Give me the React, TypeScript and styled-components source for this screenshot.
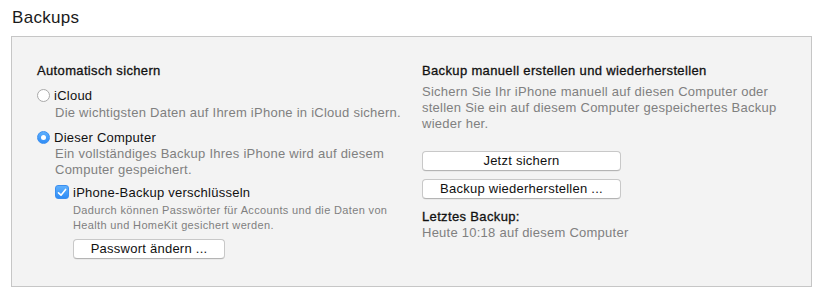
import React from "react";
import styled, { createGlobalStyle } from "styled-components";

const GlobalStyle = createGlobalStyle`
  html, body {
    margin: 0;
    padding: 0;
    background: #ffffff;
  }
  body {
    font-family: "Liberation Sans", Arial, sans-serif;
    color: #1a1a1a;
    letter-spacing: 0.25px;
    -webkit-font-smoothing: antialiased;
  }
`;

const Page = styled.div`
  width: 833px;
  height: 303px;
  padding: 6px 21px 0 11px;
  box-sizing: border-box;
`;

const Title = styled.h1`
  margin: 0 0 7px 1px;
  font-size: 17px;
  font-weight: 400;
  line-height: 23px;
  letter-spacing: 0.3px;
  color: #1a1a1a;
`;

const Panel = styled.section`
  height: 251px;
  box-sizing: border-box;
  border: 1px solid #c6c6c6;
  background: #f3f3f3;
  padding: 26px 25px 0 25px;
  display: grid;
  grid-template-columns: 385px 1fr;
`;

const Column = styled.div`
  display: flex;
  flex-direction: column;
  align-items: flex-start;
`;

const Heading = styled.div<{ $mt?: number }>`
  margin-top: ${(p) => p.$mt ?? 0}px;
  font-size: 13px;
  line-height: 16px;
  font-weight: 400;
  color: #111;
  letter-spacing: 0.35px;
  -webkit-text-stroke: 0.3px #111;
`;

const Option = styled.label<{ $mt?: number; $ml?: number }>`
  display: flex;
  align-items: center;
  gap: 4px;
  height: 18px;
  margin: ${(p) => p.$mt ?? 0}px 0 0 ${(p) => p.$ml ?? 0}px;
  font-size: 13px;
  color: #111;
`;

const Radio = styled.span<{ $checked?: boolean }>`
  width: 13px;
  height: 13px;
  border-radius: 50%;
  box-sizing: border-box;
  display: flex;
  align-items: center;
  justify-content: center;
  border: 1px solid ${(p) => (p.$checked ? "#3b8ff0" : "#a9a9a9")};
  background: ${(p) =>
    p.$checked ? "linear-gradient(#5fb0fd, #2f8cf5)" : "#ffffff"};
  &::after {
    content: "";
    display: ${(p) => (p.$checked ? "block" : "none")};
    width: 5px;
    height: 5px;
    border-radius: 50%;
    background: #fff;
  }
`;

const Check = styled.span`
  width: 14px;
  height: 14px;
  border-radius: 3px;
  box-sizing: border-box;
  background: linear-gradient(#5fb0fd, #2f8cf5);
  border: 1px solid #3b8ff0;
  display: flex;
  align-items: center;
  justify-content: center;
`;

const Hint = styled.p<{ $indent?: number; $mt?: number }>`
  margin: ${(p) => p.$mt ?? 0}px 0 0 ${(p) => p.$indent ?? 0}px;
  font-size: 13px;
  line-height: 16px;
  color: #808080;
`;

const SmallHint = styled.p`
  margin: 2px 0 0 36px;
  font-size: 11px;
  line-height: 15px;
  letter-spacing: 0.35px;
  color: #7f7f7f;
`;

const Button = styled.button<{ $width: number; $mt?: number; $ml?: number }>`
  width: ${(p) => p.$width}px;
  height: 20px;
  margin: ${(p) => p.$mt ?? 0}px 0 0 ${(p) => p.$ml ?? 0}px;
  padding: 0;
  border: 1px solid #c8c8c8;
  border-bottom-color: #b4b4b4;
  border-radius: 4px;
  background: #ffffff;
  box-shadow: 0 0.5px 0.5px rgba(0, 0, 0, 0.08);
  font-family: "Liberation Sans", Arial, sans-serif;
  font-size: 13px;
  line-height: 18px;
  letter-spacing: 0.25px;
  color: #111;
`;

export default function App() {
  return (
    <>
      <GlobalStyle />
      <Page>
        <Title>Backups</Title>
        <Panel>
          <Column>
            <Heading>Automatisch sichern</Heading>
            <Option $mt={7}>
              <Radio />
              iCloud
            </Option>
            <Hint $indent={18} $mt={1}>
              Die wichtigsten Daten auf Ihrem iPhone in iCloud sichern.
            </Hint>
            <Option $mt={7}>
              <Radio $checked />
              Dieser Computer
            </Option>
            <Hint $indent={18}>
              Ein vollständiges Backup Ihres iPhone wird auf diesem
              <br />
              Computer gespeichert.
            </Hint>
            <Option $mt={5} $ml={18}>
              <Check>
                <svg width="10" height="9" viewBox="0 0 10 9">
                  <path
                    d="M1.5 4.8 L4 7.2 L8.6 1.4"
                    fill="none"
                    stroke="#fff"
                    strokeWidth="1.6"
                    strokeLinecap="round"
                    strokeLinejoin="round"
                  />
                </svg>
              </Check>
              iPhone-Backup verschlüsseln
            </Option>
            <SmallHint>
              Dadurch können Passwörter für Accounts und die Daten von
              <br />
              Health und HomeKit gesichert werden.
            </SmallHint>
            <Button $width={152} $mt={6} $ml={36}>
              Passwort ändern ...
            </Button>
          </Column>
          <Column>
            <Heading>Backup manuell erstellen und wiederherstellen</Heading>
            <Hint $mt={5}>
              Sichern Sie Ihr iPhone manuell auf diesen Computer oder
              <br />
              stellen Sie ein auf diesem Computer gespeichertes Backup
              <br />
              wieder her.
            </Hint>
            <Button $width={199} $mt={19}>
              Jetzt sichern
            </Button>
            <Button $width={199} $mt={8}>
              Backup wiederherstellen ...
            </Button>
            <Heading $mt={10}>Letztes Backup:</Heading>
            <Hint>Heute 10:18 auf diesem Computer</Hint>
          </Column>
        </Panel>
      </Page>
    </>
  );
}
